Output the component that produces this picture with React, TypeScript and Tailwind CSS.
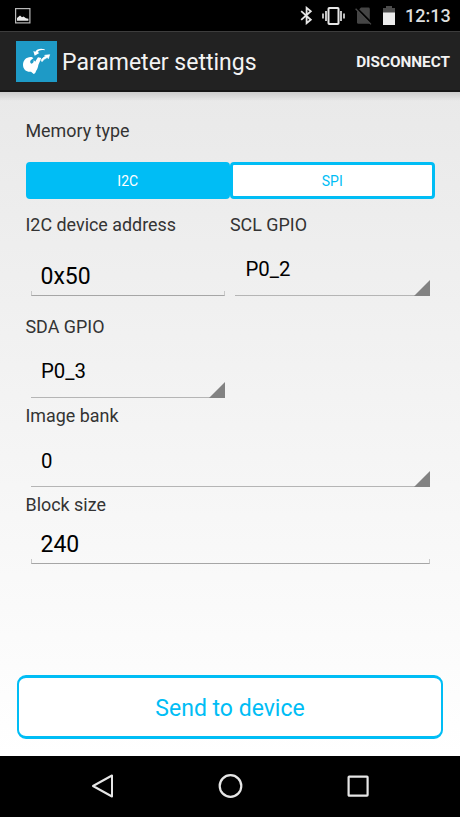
import { useState } from 'react';
import clsx from 'clsx';

const StatusBar = () => (
    <div className="flex h-[31px] items-center justify-between bg-black pl-[15px] pr-[10px]">
        <svg width="16" height="16" viewBox="0 0 16 16">
            <rect x="0.6" y="0.6" width="14.3" height="14.3" fill="none" stroke="#b9b9b9" strokeWidth="1.2" />
            <path d="M2 12.8V10l3-2.6 2 1.8 1.6-.6 2.4 1.6 2.4.6v2z" fill="#e8e8e8" />
        </svg>

        <div className="flex items-center">
            <svg width="13" height="19" viewBox="0 0 13 19" fill="none" stroke="#e6e6e6" strokeWidth="1.8">
                <path d="M1.2 5.2l9.6 8.6-4.2 3.4V1.8l4.2 3.4-9.6 8.6" />
            </svg>
            <svg className="ml-[9px]" width="23" height="18" viewBox="0 0 23 18" fill="none" stroke="#e6e6e6">
                <rect x="6.5" y="1" width="10" height="16" rx="0.8" strokeWidth="2" />
                <path d="M4 4v10M19 4v10" strokeWidth="1.7" />
                <path d="M1 6.5v5M22 6.5v5" strokeWidth="1.6" />
            </svg>
            <svg className="ml-[10px]" width="17" height="18" viewBox="0 0 17 18">
                <path d="M6 0.6h7.4q1.4 0 1.4 1.4v14.8H3.4q-1.4 0-1.4-1.4V4.6z" fill="#454545" />
                <path d="M0.8 0.4L17 16.6" stroke="#000" strokeWidth="2.2" />
                <path d="M0.6 1.8L16 17.4" stroke="#4a4a4a" strokeWidth="1.3" />
            </svg>
            <svg className="ml-[11px]" width="12" height="19" viewBox="0 0 12 19">
                <path d="M0 2h3V0h6v2h3v5H0z" fill="#4c4c4c" />
                <path d="M0 6.5h12V19H0z" fill="#ececec" />
            </svg>
            <span className="ml-[10px] w-[45px] whitespace-nowrap text-[18px] font-medium leading-[21px] text-[#dedede]">12:13</span>
        </div>
    </div>
);

const AppLogo = () => (
    <svg width="41" height="41" viewBox="0 0 123 123">
        <rect width="123" height="123" fill="#1e9ac6" />
        <path
            d="M44 48C30 48 21 59 21 71c0 14 11 23 24 21l8 7c5-1 6-5 7-9 4-5 6-11 7-18l9-21-10-2-7 10-5-5c-3-4-6-6-10-6z"
            fill="#fff"
        />
        <path d="M53 51l-8 6c-4 4-3 9 1 11 5-1 8-5 7-11l5 5 3-8z" fill="#1e9ac6" />
        <path d="M86 25C74 21 62 24 58 32l-6-2 4 14 14-8-5-3c4-5 11-8 21-5z" fill="#fff" />
        <path d="M78 62l7-8c4-1 7-2 8-5l4 4 4-12-15 2 3 3c-7 2-10 7-14 12z" fill="#fff" stroke="#fff" strokeWidth="2" />
    </svg>
);

const Header = () => (
    <div className="flex h-[61px] items-center justify-between border-t border-[#3d3d3d] border-b-2 border-b-[#171717] bg-[#222] pl-4 pr-[10px]">
        <div className="flex items-center gap-[5px]">
            <AppLogo />
            <span className="pt-[2px] text-[23px] leading-[27px] text-[#f3f3f3]">Parameter settings</span>
        </div>
        <span className="pt-[2px] text-[15.3px] font-bold leading-[18px] text-[#f3f3f3]">DISCONNECT</span>
    </div>
);

const Label = ({ text }: { text: string }) => (
    <div className="h-[21px] whitespace-nowrap text-[17.9px] leading-[21px] text-[#333]">{text}</div>
);

const Spinner = ({ label, value, className }: { label: string; value: string; className: string }) => (
    <div className="flex-1">
        <Label text={label} />
        <div className="mx-[5px] flex h-[61px] justify-between border-b border-[#b5b5b5]">
            <span className={clsx('pl-[10.5px] text-[20.4px] leading-6 text-black', className)}>{value}</span>
            <svg className="-mb-px self-end" width="16" height="16" viewBox="0 0 16 16">
                <path d="M16 0v16H0z" fill="#828282" />
            </svg>
        </div>
    </div>
);

const TextField = ({ label, value, className }: { label: string; value: string; className: string }) => (
    <div className="flex-1">
        <Label text={label} />
        <div className={clsx('mx-[5px] flex flex-col justify-end', className)}>
            <span className="pl-[10px] text-[23px] leading-[27px] text-black">{value}</span>
            <div className="h-px" />
            <div className="h-[5px] border-x border-b border-x-[#c8c8c8] border-b-[#a6a6a6]" />
        </div>
    </div>
);

const NavBar = () => (
    <div className="flex h-[61px] items-center justify-center gap-[103px] bg-black pb-px">
        <svg width="25" height="26" viewBox="0 0 25 26" fill="none" stroke="#e6e6e6" strokeWidth="2" strokeLinejoin="round">
            <path d="M22 2.5v21L3 13z" />
        </svg>
        <svg width="25" height="26" viewBox="0 0 25 26" fill="none" stroke="#e6e6e6" strokeWidth="2.2">
            <circle cx="12.5" cy="13" r="10.8" />
        </svg>
        <svg width="25" height="26" viewBox="0 0 25 26" fill="none" stroke="#e6e6e6" strokeWidth="2.2">
            <rect x="2.6" y="3.6" width="19" height="19" rx="0.6" />
        </svg>
    </div>
);

const memoryTypes = ['I2C', 'SPI'];

const App = () => {
    const [memoryType, setMemoryType] = useState('I2C');

    return (
        <div className="flex h-[817px] w-[460px] flex-col overflow-hidden font-['Roboto',sans-serif]">
            <StatusBar />
            <Header />

            <div className="flex flex-1 flex-col bg-linear-to-b from-[#e9e9e9] to-white">
                <div className="h-[9px] bg-linear-to-b from-black/12 to-transparent" />

                <div className="flex flex-1 flex-col pl-[25.5px] pr-[25.5px] pt-[19px]">
                    <Label text="Memory type" />
                    <div className="mt-[21px] flex h-[37px]">
                        {memoryTypes.map((type) => (
                            <button
                                key={type}
                                onClick={() => setMemoryType(type)}
                                className={clsx(
                                    'flex-1 rounded-[4px] border-[3px] border-[#00bdf5] text-[14px] leading-4',
                                    type === memoryType ? 'bg-[#00bdf5] text-white' : 'bg-white text-[#00bdf5]'
                                )}
                            >
                                {type}
                            </button>
                        ))}
                    </div>

                    <div className="mt-[15px] flex">
                        <TextField label="I2C device address" value="0x50" className="h-[61px]" />
                        <Spinner label="SCL GPIO" value="P0_2" className="pt-[22px]" />
                    </div>
                    <div className="mt-5 flex">
                        <Spinner label="SDA GPIO" value="P0_3" className="pt-[22px]" />
                        <div className="flex-1" />
                    </div>
                    <div className="mt-[7px] flex">
                        <Spinner label="Image bank" value="0" className="pt-[23px]" />
                    </div>
                    <div className="mt-[7px] flex">
                        <TextField label="Block size" value="240" className="h-[49px]" />
                    </div>
                </div>

                <button className="mx-[17px] mb-[17px] h-16 rounded-[9px] border-x-2 border-y-3 border-[#00bdf5] bg-white pt-[2px] text-[23px] leading-[27px] text-[#00bdf5]">
                    Send to device
                </button>
            </div>

            <NavBar />
        </div>
    );
};

export default App;
